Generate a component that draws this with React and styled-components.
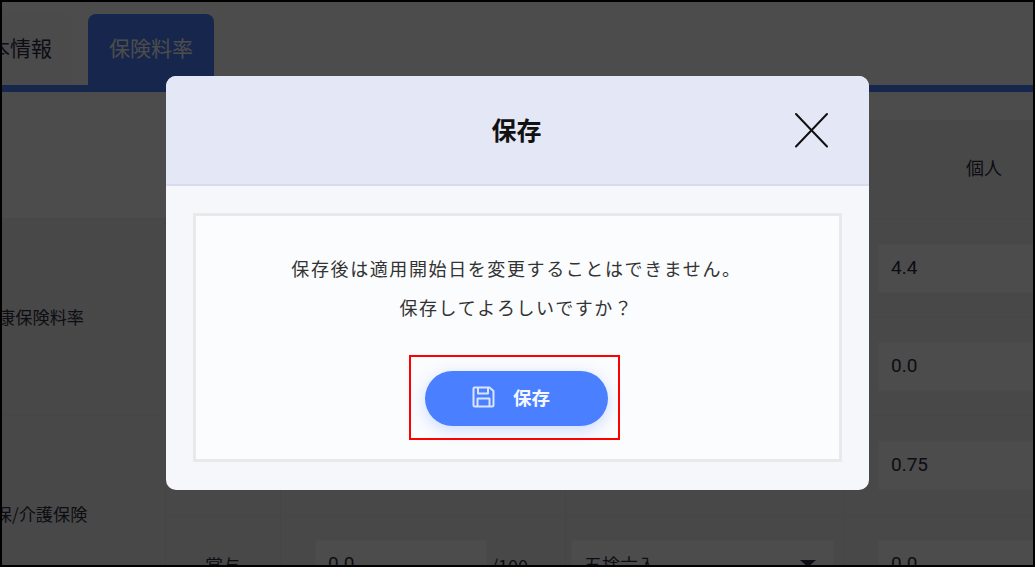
import React from "react"
import styled, { createGlobalStyle } from "styled-components"

const GlobalStyle = createGlobalStyle`
    html, body {
        margin:0;
        padding:0;
        overflow:hidden;
        background:#000;
    }
    * {
        box-sizing:border-box;
    }
`

const Page = styled.div`
    position:relative;
    width:1035px;
    height:567px;
    overflow:hidden;
    border:2px solid #000;
    background:#fff;
    color:#2c3040;
    font-family:"Noto Sans CJK JP", "Noto Sans", sans-serif;
`

const Tabs = styled.nav`
    display:flex;
    gap:15px;
    height:83px;
    padding-top:12px;
    margin-left:-55px;
`

const Tab = styled.div`
    display:flex;
    align-items:center;
    justify-content:center;
    width:126px;
    border-radius:8px 8px 0 0;
    padding-bottom:6px;
    font-size:21px;
    background:${({active})=>active ? "#4d7fff" : "#fcfcfc"};
    color:${({active})=>active ? "#fff" : "#2c3040"};
`

const TabRule = styled.div`
    height:7px;
    background:#4d7fff;
`

const Table = styled.div`
    width:1225px;
    margin-left:-102px;
`

const Head = styled.div`
    display:flex;
    height:127px;
    background:#fff;
    border-bottom:1px solid #ebebeb;
`

const HeadSpacer = styled.div`
    flex:0 0 943px;
`

const HeadCell = styled.div`
    flex:1;
    display:flex;
    align-items:center;
    justify-content:center;
    margin-top:28px;
    padding-bottom:4px;
    font-size:18px;
    background:#f1f1f1;
`

const Section = styled.div`
    display:flex;
    border-bottom:1px solid #ebebeb;
`

const SectionLabel = styled.div`
    flex:0 0 265px;
    display:flex;
    align-items:center;
    justify-content:center;
    padding-bottom:2px;
    font-size:17.2px;
    background:#f1f1f1;
`

const SectionRows = styled.div`
    flex:1;
`

const Row = styled.div`
    display:grid;
    grid-template-columns:115px 285px 278px 1fr;
    height:${({tall})=>tall ? "99px" : "98px"};
    background:#f1f1f1;
    & + & {
        border-top:1px solid #ebebeb;
    }
`

const Cell = styled.div`
    display:flex;
    align-items:center;
    gap:4px;
    padding-left:${({pad})=>pad}px;
    padding-right:${({padRight})=>padRight || 0}px;
    font-size:18px;
    border-left:1px solid #e8e8e8;
`

const SubLabel = styled(Cell)`
    justify-content:center;
`

const InputBox = styled.div`
    flex:${({fixed})=>fixed ? "0 0 172px" : "1"};
    display:flex;
    align-items:center;
    justify-content:space-between;
    height:49px;
    padding:0 12px 2px;
    font-family:"Roboto", "Noto Sans CJK JP", sans-serif;
    font-size:19px;
    background:#ffffff;
    border:1px solid #f7f7f7;
`

const SelectBox = styled(InputBox)`
    font-family:"Noto Sans CJK JP", sans-serif;
    font-size:18px;
    padding-right:17px;
`

const Caret = styled.span`
    width:0;
    height:0;
    border-left:8px solid transparent;
    border-right:8px solid transparent;
    border-top:7px solid #2c3040;
`

const Overlay = styled.div`
    position:absolute;
    inset:-2px;
    display:flex;
    align-items:center;
    justify-content:center;
    padding-bottom:1px;
    background:rgba(0,0,0,.7);
`

const Modal = styled.section`
    width:703px;
    height:414px;
    display:flex;
    flex-direction:column;
    overflow:hidden;
    border-radius:10px;
    background:#f6f7fb;
`

const ModalHeader = styled.header`
    position:relative;
    flex:0 0 110px;
    display:flex;
    align-items:center;
    justify-content:center;
    padding:0 2px 2px 0;
    background:#e4e7f6;
    border-bottom:2px solid #d8dcf0;
`

const ModalTitle = styled.h2`
    margin:0;
    font-size:25px;
    font-weight:700;
    color:#111;
`

const CloseButton = styled.button`
    position:absolute;
    top:36px;
    right:41px;
    display:flex;
    padding:0;
    border:0;
    background:none;
    color:#111;
`

const ModalBody = styled.div`
    flex:1;
    padding:27px 27px 28px;
    display:flex;
`

const MessageBox = styled.div`
    flex:1;
    display:flex;
    flex-direction:column;
    align-items:center;
    padding:33px 2px 0 0;
    background:#fbfcfe;
    border:3px solid #e9e9ea;
`

const Message = styled.p`
    margin:0;
    font-size:18px;
    line-height:39px;
    letter-spacing:1.6px;
    text-align:center;
    color:#333;
`

const SaveButton = styled.button`
    position:relative;
    margin-top:44px;
    width:183px;
    height:55px;
    display:flex;
    align-items:center;
    justify-content:center;
    gap:18px;
    padding:0 11px 4px 0;
    border:0;
    border-radius:28px;
    font-family:inherit;
    font-size:18.5px;
    font-weight:700;
    color:#f4f7ff;
    background:#4a80ff;
    box-shadow:0 4px 16px rgba(74,128,255,.28);
`

const Highlight = styled.span`
    position:absolute;
    inset:-16px -12px -14px -16px;
    border:2px solid #f00;
`

function SaveIcon(){
    return(
        <svg width="23" height="22" viewBox="0 0 23 22" fill="none" stroke="#d9e4ff" strokeWidth="2" strokeLinejoin="round">
            <path d="M2.500 1.500H17.500L21.500 5V19A1.500 1.500 0 0 1 20 20.500H3A1.500 1.500 0 0 1 1.500 19V2.500A1 1 0 0 1 2.500 1.500Z"/>
            <path d="M6 1.500V7.500H16V1.500"/>
            <path d="M5.500 20.500V12.500H17.500V20.500"/>
        </svg>
    )
}

function CloseIcon(){
    return(
        <svg width="34" height="36" viewBox="0 0 34 36" stroke="currentColor" strokeWidth="2" strokeLinecap="round">
            <path d="M2 2L33 34.500"/>
            <path d="M33 2L2 34.500"/>
        </svg>
    )
}

function App(){
    return(
        <>
            <GlobalStyle/>
            <Page>
                <Tabs>
                    <Tab>基本情報</Tab>
                    <Tab active>保険料率</Tab>
                </Tabs>
                <TabRule/>
                <Table>
                    <Head>
                        <HeadSpacer/>
                        <HeadCell>個人</HeadCell>
                    </Head>
                    <Section>
                        <SectionLabel>健康保険料率</SectionLabel>
                        <SectionRows>
                            <Row>
                                <Cell/><Cell/><Cell/>
                                <Cell pad={34}><InputBox>4.4</InputBox></Cell>
                            </Row>
                            <Row>
                                <Cell/><Cell/><Cell/>
                                <Cell pad={34}><InputBox>0.0</InputBox></Cell>
                            </Row>
                        </SectionRows>
                    </Section>
                    <Section>
                        <SectionLabel>健保/介護保険</SectionLabel>
                        <SectionRows>
                            <Row tall>
                                <Cell/><Cell/><Cell/>
                                <Cell pad={34}><InputBox>0.75</InputBox></Cell>
                            </Row>
                            <Row>
                                <SubLabel>賞与</SubLabel>
                                <Cell pad={34}>
                                    <InputBox fixed>0.0</InputBox>
                                    /100
                                </Cell>
                                <Cell pad={5} padRight={9}>
                                    <SelectBox>五捨六入<Caret/></SelectBox>
                                </Cell>
                                <Cell pad={34}><InputBox>0.0</InputBox></Cell>
                            </Row>
                        </SectionRows>
                    </Section>
                </Table>
                <Overlay>
                    <Modal>
                        <ModalHeader>
                            <ModalTitle>保存</ModalTitle>
                            <CloseButton aria-label="閉じる"><CloseIcon/></CloseButton>
                        </ModalHeader>
                        <ModalBody>
                            <MessageBox>
                                <Message>
                                    保存後は適用開始日を変更することはできません。
                                    <br/>
                                    保存してよろしいですか？
                                </Message>
                                <SaveButton>
                                    <SaveIcon/>
                                    保存
                                    <Highlight/>
                                </SaveButton>
                            </MessageBox>
                        </ModalBody>
                    </Modal>
                </Overlay>
            </Page>
        </>
    )
}

export default App
